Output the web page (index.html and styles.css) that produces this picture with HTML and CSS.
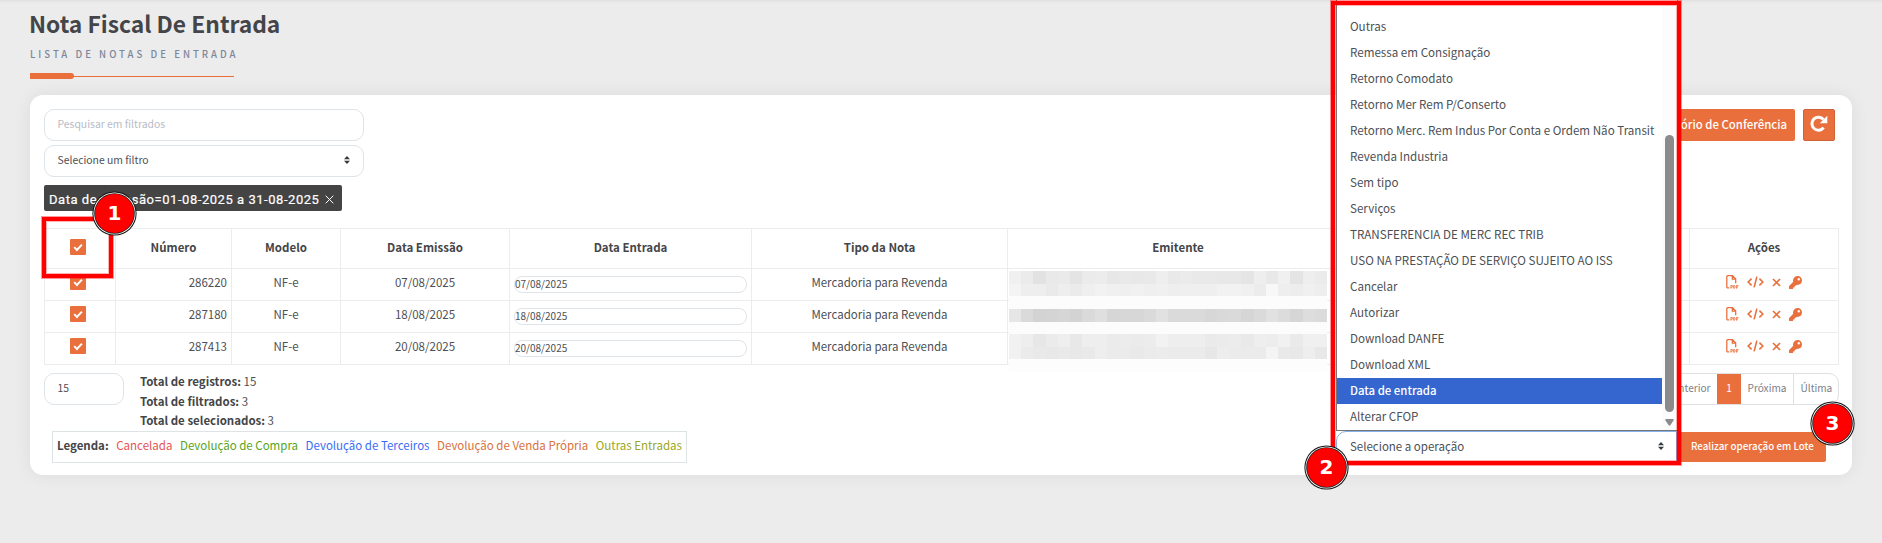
FILE: index.html
```html
<!DOCTYPE html>
<html lang="pt-BR">
<head>
<meta charset="utf-8">
<title>Nota Fiscal De Entrada</title>
<link rel="stylesheet" href="styles.css">
</head>
<body>
<svg class="defs" aria-hidden="true">
  <symbol id="check" viewBox="0 0 16 16"><path d="M4.2 8.2l2.7 2.8 5-5.4" fill="none" stroke="#fff" stroke-width="1.9"/></symbol>
  <symbol id="caret" viewBox="0 0 6 8"><path d="M0 3.2L3 0l3 3.2zM0 4.8L3 8l3-3.2z" fill="#343a40"/></symbol>
  <symbol id="pdf" viewBox="0 0 13 14"><path d="M3.2 12.9H1.8a1 1 0 0 1-1-1V1.7a1 1 0 0 1 1-1h4.7l3.2 3.2v4.4M6.3.8v3.3h3.4" fill="none" stroke="currentColor" stroke-width="1.3"/><path d="M4.9 13.7V10.4h.9a.9.9 0 0 1 0 1.8h-.9M7.7 10.4v2.9h.5c1.3 0 1.3-2.9 0-2.9zM10.6 13.7v-3.3h1.9M10.6 12h1.5" fill="none" stroke="currentColor" stroke-width=".9"/></symbol>
  <symbol id="code" viewBox="0 0 17 12"><path d="M4.6 2.6L1.2 6l3.4 3.4M12.4 2.6L15.8 6l-3.4 3.4M9.9.6L7.1 11.4" fill="none" stroke="currentColor" stroke-width="1.6"/></symbol>
  <symbol id="times" viewBox="0 0 9 9"><path d="M1 1l7 7M8 1L1 8" fill="none" stroke="currentColor" stroke-width="1.7"/></symbol>
  <symbol id="key" viewBox="0 0 512 512"><path fill="currentColor" d="M512 176c0 97-79 176-176 176-11 0-22-1-33-3l-24 27a24 24 0 0 1-18 8h-37v40a24 24 0 0 1-24 24h-40v40a24 24 0 0 1-24 24H24a24 24 0 0 1-24-24v-78c0-6 3-12 7-17l162-162a176 176 0 1 1 343-55zm-176-48a48 48 0 1 0 96 0 48 48 0 0 0-96 0z"/></symbol>
</svg>

<header class="heading">
  <h1 class="heading-title">Nota Fiscal De Entrada</h1>
  <p class="heading-sub">Lista de notas de entrada</p>
  <div class="heading-rule"></div>
</header>

<main class="card">
  <div class="toolbar">
    <div class="filters">
      <div class="field placeholder">Pesquisar em filtrados</div>
      <div class="field">Selecione um filtro <svg class="caret"><use href="#caret"/></svg></div>
      <div class="tag">Data de Emissão=01-08-2025 a 31-08-2025 <svg class="tag-x" viewBox="0 0 9 9"><path d="M.7.7l7.6 7.6M8.3.7L.7 8.3" stroke="#fff" fill="none"/></svg></div>
    </div>
    <div class="buttons">
      <div class="btn">Relatório de Conferência</div>
      <div class="btn btn-icon"><svg class="refresh" viewBox="0 0 18 18"><path d="M13.6 12.6A6.5 6.5 0 1 1 13.5 4.6" fill="none" stroke="#fff" stroke-width="3"/><path d="M17.3.8v7.4H9.8z" fill="#fff"/></svg></div>
    </div>
  </div>

  <table class="grid">
    <colgroup><col class="c-check"><col class="c-num"><col class="c-model"><col class="c-issue"><col class="c-entry"><col class="c-type"><col class="c-issuer"><col class="c-value"><col class="c-actions"></colgroup>
    <thead>
      <tr><th><span class="box"><svg><use href="#check"/></svg></span></th><th>Número</th><th>Modelo</th><th>Data Emissão</th><th>Data Entrada</th><th>Tipo da Nota</th><th>Emitente</th><th></th><th>Ações</th></tr>
    </thead>
    <tbody>
      <tr><td><span class="box"><svg><use href="#check"/></svg></span></td><td class="num">286220</td><td>NF-e</td><td>07/08/2025</td><td class="entry"><div class="date">07/08/2025</div></td><td>Mercadoria para Revenda</td><td></td><td></td><td><div class="actions"><svg class="i-pdf"><use href="#pdf"/></svg><svg class="i-code"><use href="#code"/></svg><svg class="i-x"><use href="#times"/></svg><svg class="i-key"><use href="#key"/></svg></div></td></tr>
      <tr><td><span class="box"><svg><use href="#check"/></svg></span></td><td class="num">287180</td><td>NF-e</td><td>18/08/2025</td><td class="entry"><div class="date">18/08/2025</div></td><td>Mercadoria para Revenda</td><td></td><td></td><td><div class="actions"><svg class="i-pdf"><use href="#pdf"/></svg><svg class="i-code"><use href="#code"/></svg><svg class="i-x"><use href="#times"/></svg><svg class="i-key"><use href="#key"/></svg></div></td></tr>
      <tr><td><span class="box"><svg><use href="#check"/></svg></span></td><td class="num">287413</td><td>NF-e</td><td>20/08/2025</td><td class="entry"><div class="date">20/08/2025</div></td><td>Mercadoria para Revenda</td><td></td><td></td><td><div class="actions"><svg class="i-pdf"><use href="#pdf"/></svg><svg class="i-code"><use href="#code"/></svg><svg class="i-x"><use href="#times"/></svg><svg class="i-key"><use href="#key"/></svg></div></td></tr>
    </tbody>
  </table>

  <div class="footer">
    <div class="field page-size">15</div>
    <div class="totals">
      <div><b>Total de registros:</b> 15</div>
      <div><b>Total de filtrados:</b> 3</div>
      <div><b>Total de selecionados:</b> 3</div>
    </div>
    <div class="pager"><span>Anterior</span><span class="current">1</span><span class="next">Próxima</span><span class="last">Última</span></div>
  </div>

  <div class="bottom">
    <div class="legend"><b>Legenda:</b><span class="l-red">Cancelada</span><span class="l-green">Devolução de Compra</span><span class="l-blue">Devolução de Terceiros</span><span class="l-orange">Devolução de Venda Própria</span><span class="l-olive">Outras Entradas</span></div>
    <div class="batch">
      <div class="batch-select">Selecione a operação <svg class="caret"><use href="#caret"/></svg></div>
      <div class="batch-btn">Realizar operação em Lote</div>
    </div>
  </div>
</main>

<div class="mosaic" id="mosaic"></div>

<div class="menu">
  <ul class="menu-list">
    <li>Outras</li><li>Remessa em Consignação</li><li>Retorno Comodato</li><li>Retorno Mer Rem P/Conserto</li><li>Retorno Merc. Rem Indus Por Conta e Ordem Não Transit</li><li>Revenda Industria</li><li>Sem tipo</li><li>Serviços</li><li>TRANSFERENCIA DE MERC REC TRIB</li><li>USO NA PRESTAÇÃO DE SERVIÇO SUJEITO AO ISS</li><li>Cancelar</li><li>Autorizar</li><li>Download DANFE</li><li>Download XML</li><li class="active">Data de entrada</li><li>Alterar CFOP</li>
  </ul>
  <div class="menu-scroll"><div class="thumb"></div><svg class="down" viewBox="0 0 9 7"><path d="M1 0h7q1.3.5.5 1.5L5.3 6.3q-.8.9-1.6 0L.5 1.5Q-.3.5 1 0z" fill="#8b8b8b"/></svg></div>
</div>

<div class="mark mark-1"></div>
<div class="mark mark-2"></div>
<div class="step step-1">1</div>
<div class="step step-2">2</div>
<div class="step step-3">3</div>
<script src="app.js"></script>
</body>
</html>
```

FILE: styles.css
```css
* { box-sizing: border-box; }
html { overflow: hidden; }
body {
  margin: 0;
  height: 543px;
  overflow: hidden;
  background: #ececec;
  color: #4d4f54;
  font: 11.5px/18px "Noto Sans CJK SC", "Noto Sans", sans-serif;
  box-shadow: inset 0 3px 3px -2px #dcdcdc;
}
b, th, h1 { font-weight: 700; color: #444548; }
.defs { position: absolute; width: 0; height: 0; }

.heading { height: 95px; padding: 7px 30px 0; }
.heading-title { margin: 0 0 0 -1px; font-size: 22.8px; line-height: 34px; }
.heading-sub { margin: 4px 0 0; font-size: 9.6px; line-height: 18px; letter-spacing: 3px; text-transform: uppercase; color: #7d879c; font-weight: 500; }
.heading-rule { width: 204px; height: 6px; margin-top: 10px; background: linear-gradient(#e9703d, #e9703d) 0 3px / 100% 1px no-repeat; }
.heading-rule::before { content: ""; display: block; width: 44px; height: 6px; border-radius: 0 3px 3px 0; background: #e9703d; }

.card { margin: 0 30px; height: 380px; padding: 14px 13px 0 14px; background: #fff; border-radius: 13px; box-shadow: 0 0 18px rgba(0, 0, 0, .07); }
.toolbar { display: flex; justify-content: space-between; height: 119px; }
.filters { display: flex; flex-direction: column; gap: 4px; align-items: flex-start; }
.field { display: flex; align-items: center; justify-content: space-between; width: 320px; height: 32px; padding: 0 13px 2px 12.5px; border: 1px solid #dee4e8; border-radius: 10px; font-size: 10.4px; background: #fff; }
.placeholder { color: #b9bbc6; }
.caret { width: 6px; height: 8px; }
.tag { display: flex; align-items: center; justify-content: space-between; width: 298px; height: 26px; margin-top: 4px; padding: 3px 8px 0 5px; border-radius: 2px; background: #444; color: #fff; font: 13px/20px Roboto, sans-serif; letter-spacing: .54px; white-space: nowrap; -webkit-text-stroke: .2px #fff; }
.tag-x { width: 9px; height: 9px; }
.buttons { display: flex; gap: 8px; }
.btn { display: flex; align-items: center; height: 32px; padding: 0 8px 3px; border-radius: 2px; background: #e9703d; color: #fff; font-size: 11.4px; font-weight: 500; }
.btn-icon { width: 32px; margin-right: 4px; padding: 0; justify-content: center; border: 1px solid #cf6236; }
.refresh { width: 18px; height: 18px; margin-top: -2px; }

.grid { width: 1795px; table-layout: fixed; border-collapse: collapse; text-align: center; }
.c-check { width: 71px; } .c-num { width: 116px; } .c-model { width: 109px; } .c-issue { width: 169px; } .c-entry { width: 242px; } .c-type { width: 256px; } .c-issuer { width: 341px; } .c-value { width: 341px; }
.grid th, .grid td { padding: 0; border: 1px solid #ececec; vertical-align: middle; }
.grid th { height: 40px; padding-bottom: 3px; }
.grid td { height: 32px; padding-bottom: 5px; }
.grid .num { text-align: right; padding-right: 4px; }
.grid .entry { padding: 0 4px; }
.date { height: 17px; border: 1px solid #dee4e8; border-radius: 8px; font-size: 10px; line-height: 14px; text-align: left; }
.box { display: block; width: 16px; height: 16px; margin: 0 auto; border-radius: 1px; background: #e9703d; transform: translateX(-2px); }
.box svg { display: block; width: 16px; height: 16px; }
.actions { display: flex; align-items: center; justify-content: center; gap: 8px; color: #e9703d; height: 14px; }
.i-pdf { width: 13px; height: 14px; } .i-code { width: 17px; height: 12px; } .i-x { width: 9px; height: 9px; } .i-key { width: 13px; height: 13px; }

.footer { display: flex; height: 66px; padding-top: 8px; }
.page-size { width: 80px; }
.totals { margin: -1px 0 0 16px; line-height: 19.5px; }
.pager { display: flex; height: 32px; margin-left: auto; border: 1px solid #dee0e4; border-radius: 10px; overflow: hidden; font-size: 10.1px; line-height: 28px; color: #7d8087; }
.pager span { padding: 0 6.5px; }
.pager .current { width: 24px; padding: 0; text-align: center; background: #e9703d; color: #fff; }
.pager .next { width: 52px; }
.pager .last { width: 45px; border-left: 1px solid #dee0e4; }

.bottom { display: flex; justify-content: space-between; padding: 0 13px 0 8px; }
.legend { display: flex; align-items: center; justify-content: space-between; width: 635px; height: 32px; padding: 0 4px 4px; border: 1px solid #dee4e6; white-space: nowrap; }
.l-red { color: #e55353; } .l-green { color: #56a51c; } .l-blue { color: #3a6cf5; } .l-orange { color: #d8713c; } .l-olive { color: #9aa722; }
.batch { display: flex; }
.batch-select { display: flex; align-items: center; justify-content: space-between; width: 341px; height: 31px; padding: 0 12px 1px 13px; border: 1px solid #86b1e8; border-radius: 10px 0 0 10px; font-size: 11.5px; }
.batch-btn { height: 30px; margin-top: 1px; padding: 0 0 0 14px; width: 149px; background: #e9703d; color: #fff; font-size: 9.8px; font-weight: 500; line-height: 28px; white-space: nowrap; border-radius: 0 2px 2px 0; }

.mosaic { position: absolute; left: 1009px; top: 271px; width: 318px; height: 101px; display: grid; grid-template: repeat(8, 1fr) / repeat(26, 1fr); }

.menu { position: absolute; left: 1336px; top: 0; width: 342px; height: 431px; display: flex; background: #fff; border: 1px solid #767676; border-top: 0; }
.menu-list { flex: 1; min-width: 0; margin: 0; padding: 14px 0 0; list-style: none; font-size: 11.62px; line-height: 24px; }
.menu-list li { height: 26px; padding-left: 13px; white-space: nowrap; }
.menu-list .active { background: #3566cf; color: #fff; font-weight: 500; font-size: 11.4px; }
.menu-scroll { flex: none; width: 15px; padding: 135px 0 0 3px; background: #fcfcfc; }
.thumb { width: 9px; height: 277px; border-radius: 5px; background: #8b8b8b; }
.down { display: block; width: 9px; height: 7px; margin-top: 7px; }

.mark { position: absolute; border: 4px solid #f00; box-shadow: 0 0 0 1px rgba(255, 0, 0, .4), inset 0 0 0 1px rgba(255, 0, 0, .3); }
.mark-1 { left: 42px; top: 217px; width: 71px; height: 61px; }
.mark-2 { left: 1331px; top: 1px; width: 350px; height: 464px; }
.step { position: absolute; width: 39px; height: 39px; border-radius: 50%; background: #f00; box-shadow: 0 0 0 .8px #222, 0 0 0 1.6px #fff, 0 0 0 2.6px #111; color: #fff; font: bold 20px/39px "DejaVu Sans", sans-serif; text-align: center; }
.step-1 { left: 95px; top: 194px; }
.step-2 { left: 1307px; top: 448px; }
.step-3 { left: 1813px; top: 404px; }
```

FILE: app.js
```js
// Grey levels of the masked issuer cells, two hex digits per cell.
const rows = [
  "f0ebe2e9eae4ebece7e9e8e9eee9ebe9e9e8e8e5eee8f0e4eeeb",
  "f4eeeeeaeeebeff2f0eff1eff0eeefefeff2f2f0ecf8eeedf0ee",
  "fcfcfcfcfcfcfcfcfcfcfcfcfcfcfcfcfcfcfcfcfcfcfcfcfcfc",
  "e6dad3d4d6d3dadfd6d7d7dae1dadadad7d9dad6dae1dcd6dddb",
  "fcfcfcfcfcfcfcfcfcfcfcfcfcfcfcfcfcfcfcfcfcfcfcfcfcfc",
  "f1eee7ebeee8eeeeebecebecf2eeeeeeeaebece9eeedf1eaf0f0",
  "f1ebe9e8e9e8e9eeebebe9ebecebebebe7edebebebf4e9e8eee8",
  "fdfdfdfdfdfdfdfdfdfdfdfdfdfdfdfdfdfdfdfdfdfdfdfdfdfd"
];
const mosaic = document.getElementById("mosaic");
for (const row of rows) {
  for (const level of row.match(/../g)) {
    const cell = document.createElement("i");
    cell.style.background = "#" + level + level + level;
    mosaic.append(cell);
  }
}
```
